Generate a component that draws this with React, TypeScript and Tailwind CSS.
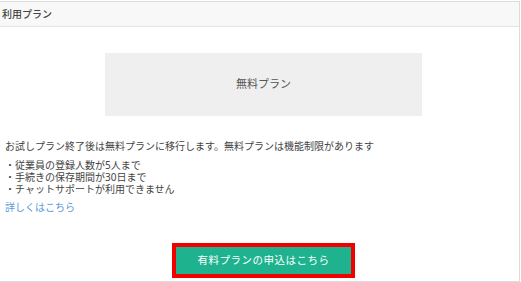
export default function App() {
  return (
    <div
      className="w-[521px] h-[282px] bg-white pt-px"
      style={{ fontFamily: '"Noto Sans", "Noto Sans CJK JP", sans-serif' }}
    >
      <div className="h-[281px] w-[520px] border border-l-0 border-[#dcdcdc] flex flex-col">
        {/* ヘッダー */}
        <div className="h-[25px] bg-[#f8f8f8] border-b border-[#e4e4e4] flex items-center pl-[2px]">
          <span className="text-[10px] font-medium text-[#444]">利用プラン</span>
        </div>

        <div className="flex-1 flex flex-col">
          <div className="mt-[26px] ml-[105px] w-[317px] h-[63px] bg-[#efefef] flex items-center justify-center">
            <span className="text-[11px] text-[#555]">無料プラン</span>
          </div>

          <p className="mt-[23px] pl-[5px] text-[10px] leading-[14px] text-[#444]">
            お試しプラン終了後は無料プランに移行します。無料プランは機能制限があります
          </p>

          <ul className="mt-[6px] pl-[5px] text-[10px] leading-[12px] text-[#444]">
            <li>・従業員の登録人数が5人まで</li>
            <li>・手続きの保存期間が30日まで</li>
            <li>・チャットサポートが利用できません</li>
          </ul>

          <a className="mt-[5px] pl-[5px] text-[10px] leading-[14px] text-[#5a9bd8]">
            詳しくはこちら
          </a>

          <div className="mt-[29px] flex justify-center pl-[8px]">
            <button className="w-[183px] h-[35px] bg-[#1eb38e] border-[4px] border-[#f20000] text-white text-[10.5px] tracking-[0.5px]">
              有料プランの申込はこちら
            </button>
          </div>
        </div>
      </div>
    </div>
  );
}
